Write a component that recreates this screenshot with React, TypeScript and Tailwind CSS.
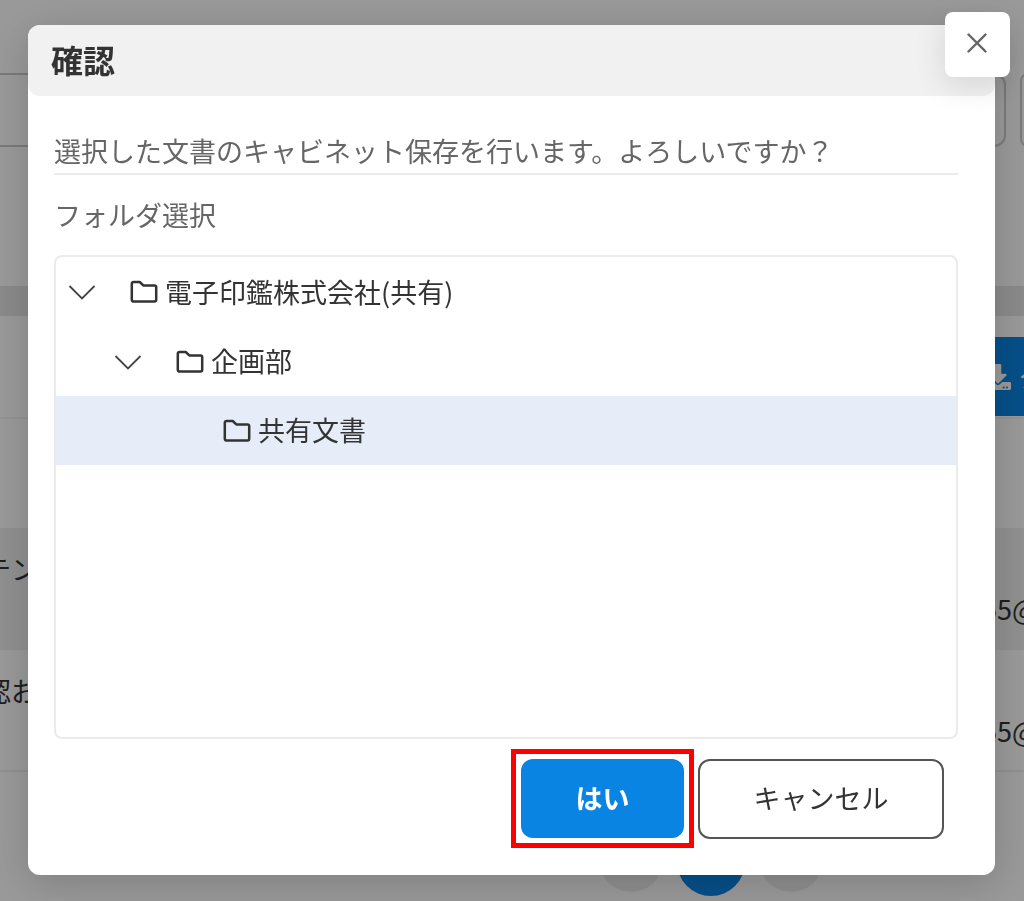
import React, { useState } from "react";
import { FaDownload } from "react-icons/fa";

interface Folder {
  id: string;
  name: string;
  level: number;
  expandable: boolean;
}

const FOLDERS: Folder[] = [
  { id: "company", name: "電子印鑑株式会社(共有)", level: 0, expandable: true },
  { id: "planning", name: "企画部", level: 1, expandable: true },
  { id: "shared", name: "共有文書", level: 2, expandable: false },
];

const INDENT = ["pl-3", "pl-[58px]", "pl-[105px]"];

const DOCUMENTS = [
  { title: "テン", mail: "55@example.com", row: "bg-[#f0f0f0]" },
  { title: "認お", mail: "55@example.com", row: "bg-white border-b-2 border-[#eee]" },
];

const FolderIcon = () => (
  <svg viewBox="0 0 28 24" className="w-7 h-6 shrink-0" fill="none" aria-hidden="true">
    <path
      d="M3.500 2h6.200l3.600 3.400h11.200a1.700 1.700 0 0 1 1.700 1.700v12.700a1.700 1.700 0 0 1-1.700 1.700h-21a1.700 1.700 0 0 1-1.700-1.700V3.700A1.700 1.700 0 0 1 3.500 2Z"
      stroke="#333"
      strokeWidth="2.500"
      strokeLinejoin="round"
    />
  </svg>
);

const ChevronIcon = () => (
  <svg viewBox="0 0 28 16" className="w-7 h-4" fill="none" aria-hidden="true">
    <path d="M1.500 2 14 14.500 26.500 2" stroke="#444" strokeWidth="1.800" />
  </svg>
);

// Document list that stays behind the dialog
const Background = () => (
  <div className="flex flex-col min-h-screen overflow-hidden bg-white text-[#333]" aria-hidden="true">
    <header className="flex items-start h-[286px] pt-[73px]">
      <div className="flex-1 h-[74px] mr-[14px] -ml-4 rounded-xl border-2 border-[#ccc]" />
      <div className="w-4 h-[74px] -mr-3 rounded-xl border-2 border-[#ccc]" />
    </header>
    <div className="h-[30px] bg-[#e6e6e6]" />
    <section className="flex-1">
      <div className="flex justify-end pt-[21px] h-[103px] border-b-2 border-[#f4f4f4]">
        <div className="flex items-center gap-2 h-[79px] w-[70px] pl-[31px] bg-[#0984e3] text-white">
          <FaDownload className="size-[26px] shrink-0" />
          <span className="text-[27px] whitespace-nowrap">ダウンロード</span>
        </div>
      </div>
      <div className="h-[109px]" />
      {DOCUMENTS.map((doc, idx) => (
        <div
          key={idx}
          className={`flex justify-between h-[122px] text-[27px] whitespace-nowrap overflow-hidden ${doc.row}`}
        >
          <span className="-ml-4 pt-[21px]">{doc.title}</span>
          <span className="w-[42px] pt-[61px]">{doc.mail}</span>
        </div>
      ))}
      <div className="flex justify-center gap-[14px] pt-[56px] ml-[398px]">
        <span className="size-16 rounded-full bg-[#eee]" />
        <span className="size-[68px] rounded-full bg-[#0984e3]" />
        <span className="size-16 rounded-full bg-[#eee]" />
      </div>
    </section>
  </div>
);

export default function App() {
  const [selected, setSelected] = useState("shared");

  return (
    <main
      lang="ja"
      className="relative h-screen overflow-hidden font-['Noto_Sans_CJK_JP',sans-serif]"
    >
      <Background />

      <div className="fixed inset-0 bg-black/40 pl-7 pr-[29px] pt-[25px] pb-[26px]">
        <div
          role="dialog"
          aria-modal="true"
          aria-labelledby="dialog-title"
          className="relative flex flex-col h-full rounded-xl bg-white shadow-[0_8px_40px_rgba(0,0,0,0.18)]"
        >
          <h1
            id="dialog-title"
            className="flex items-center h-[71px] shrink-0 px-[23px] pb-1 rounded-xl bg-[#f1f1f1] text-[32px] font-bold text-[#333]"
          >
            確認
          </h1>
          <button
            type="button"
            aria-label="閉じる"
            className="absolute -top-[13px] -right-[15px] flex items-center justify-center size-[65px] pb-[3px] pr-px rounded-lg bg-white shadow-[0_8px_32px_rgba(0,0,0,0.12)]"
          >
            <svg viewBox="0 0 20 20" className="size-5" fill="none" aria-hidden="true">
              <path d="m1.500 1.500 17 17m0-17-17 17" stroke="#666" strokeWidth="2.400" strokeLinecap="round" />
            </svg>
          </button>

          <div className="flex flex-col flex-1 pt-[35px] pb-[27px] pl-[26px] pr-[37px]">
            <p className="pb-[2px] border-b-2 border-[#ebebeb] text-[27px] leading-10 text-[#666]">
              選択した文書のキャビネット保存を行います。よろしいですか？
            </p>
            <h2 id="folder-label" className="mt-5 text-[27px] leading-10 text-[#666]">
              フォルダ選択
            </h2>

            <ul
              role="tree"
              aria-labelledby="folder-label"
              className="flex-1 mt-5 rounded-lg border-2 border-[#ebebeb] text-[27px] text-[#333]"
            >
              {FOLDERS.map((folder) => (
                <li
                  key={folder.id}
                  role="treeitem"
                  aria-level={folder.level + 1}
                  aria-selected={selected === folder.id}
                  className={`flex items-center h-[69px] first:h-[70px] ${INDENT[folder.level]} ${
                    selected === folder.id ? "bg-[#e6edf8]" : ""
                  }`}
                >
                  {folder.expandable ? (
                    <button type="button" aria-label={`${folder.name}を閉じる`} className="w-[62px]">
                      <ChevronIcon />
                    </button>
                  ) : (
                    <span className="w-[62px]" />
                  )}
                  <button
                    type="button"
                    onClick={() => setSelected(folder.id)}
                    className="flex items-center gap-[7px]"
                  >
                    <FolderIcon />
                    {folder.name}
                  </button>
                </li>
              ))}
            </ul>

            <div className="flex justify-end gap-1 mt-[10px] pr-[14px] text-[27px]">
              <div className="p-[5px] border-[5px] border-[#f00]">
                <button
                  type="button"
                  className="block w-[163px] h-[79px] rounded-xl bg-[#0984e3] font-bold text-white"
                >
                  はい
                </button>
              </div>
              <button
                type="button"
                className="self-center w-[246px] h-[80px] rounded-xl border-2 border-[#555] text-[#333]"
              >
                キャンセル
              </button>
            </div>
          </div>
        </div>
      </div>
    </main>
  );
}
